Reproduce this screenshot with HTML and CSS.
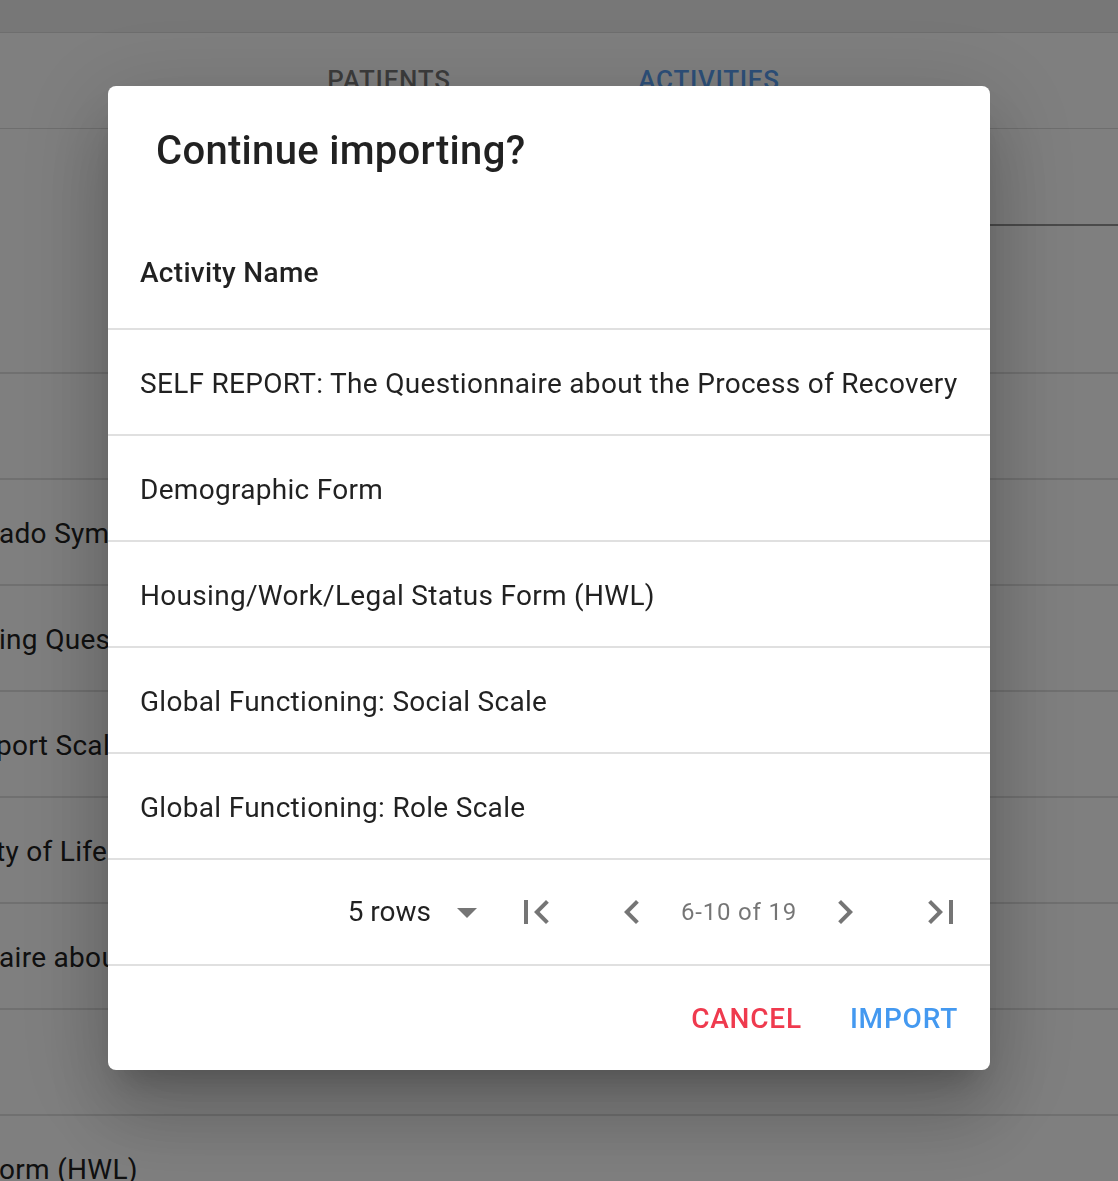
FILE: index.html
```html
<!DOCTYPE html>
<html lang="en">
<head>
<meta charset="utf-8">
<title>Continue importing?</title>
<link rel="stylesheet" href="styles.css">
</head>
<body>
<div class="page">
  <div class="appbar"></div>
  <div class="tabs">
    <div class="tab">Patients</div>
    <div class="tab tab-active">Activities</div>
  </div>
  <div class="search">
    <div class="search-field"></div>
  </div>
  <div class="bg-row"></div>
  <div class="bg-row">ado Symptom Index</div>
  <div class="bg-row">ing Questionnaire</div>
  <div class="bg-row bg-cut">port Scale</div>
  <div class="bg-row bg-cut">ty of Life</div>
  <div class="bg-row">aire about the Process of Recovery</div>
  <div class="bg-row"></div>
  <div class="bg-row">orm (HWL)</div>
</div>

<div class="backdrop">
  <div class="dialog" role="dialog" aria-labelledby="dlg-title">
    <h2 class="dialog-title" id="dlg-title">Continue importing?</h2>
    <div class="table">
      <div class="cell cell-head">Activity Name</div>
      <div class="cell">SELF REPORT: The Questionnaire about the Process of Recovery</div>
      <div class="cell">Demographic Form</div>
      <div class="cell">Housing/Work/Legal Status Form (HWL)</div>
      <div class="cell">Global Functioning: Social Scale</div>
      <div class="cell">Global Functioning: Role Scale</div>
      <div class="pagination">
        <span class="rows-label">5 rows</span>
        <svg class="icon icon-drop" viewBox="0 0 24 24" aria-hidden="true"><path d="M7 10l5 5 5-5z"/></svg>
        <svg class="icon icon-first" viewBox="0 0 24 24" aria-hidden="true"><path d="M18.41 16.59L13.82 12l4.59-4.59L17 6l-6 6 6 6zM6 6h2v12H6z"/></svg>
        <svg class="icon icon-prev" viewBox="0 0 24 24" aria-hidden="true"><path d="M15.41 7.41L14 6l-6 6 6 6 1.41-1.41L10.83 12z"/></svg>
        <span class="caption">6-10 of 19</span>
        <svg class="icon icon-next" viewBox="0 0 24 24" aria-hidden="true"><path d="M10 6L8.59 7.41 13.17 12l-4.58 4.59L10 18l6-6z"/></svg>
        <svg class="icon icon-last" viewBox="0 0 24 24" aria-hidden="true"><path d="M5.59 7.41L10.18 12l-4.59 4.59L7 18l6-6-6-6zM16 6h2v12h-2z"/></svg>
      </div>
    </div>
    <div class="actions">
      <button class="btn btn-cancel" type="button">Cancel</button>
      <button class="btn btn-import" type="button">Import</button>
    </div>
  </div>
</div>
</body>
</html>
```

FILE: styles.css
```css
* {
  box-sizing: border-box;
}

html, body {
  margin: 0;
  padding: 0;
  width: 1118px;
  height: 1181px;
  overflow: hidden;
  background: #ffffff;
  font-family: Roboto, "Liberation Sans", sans-serif;
  color: rgba(0, 0, 0, 0.87);
}

/* ---------- background page ---------- */
.page {
  width: 1118px;
}

.appbar {
  height: 33px;
  background: #eeeeee;
  border-bottom: 1px solid #dcdcdc;
}

.tabs {
  display: flex;
  height: 96px;
  padding-left: 229px;
  border-bottom: 1px solid #dcdcdc;
}

.tab {
  width: 320px;
  text-align: center;
  font-size: 26px;
  font-weight: 500;
  letter-spacing: 0.7px;
  text-transform: uppercase;
  color: rgba(0, 0, 0, 0.54);
  padding-top: 27px;
  line-height: 40px;
}

.tab-active {
  color: #5a9ff2;
}

.search {
  height: 245px;
  padding-top: 95px;
  border-bottom: 2px solid #e0e0e0;
}

.search-field {
  margin-left: 600px;
  height: 2px;
  background: rgba(0, 0, 0, 0.42);
}

.bg-row {
  height: 106px;
  padding-top: 4px;
  line-height: 100px;
  border-bottom: 2px solid #e0e0e0;
  font-size: 28px;
  letter-spacing: 0.3px;
  color: #212121;
  white-space: nowrap;
  overflow: hidden;
  text-indent: -1px;
}

.bg-cut {
  text-indent: -4px;
}

/* ---------- modal ---------- */
.backdrop {
  position: fixed;
  inset: 0;
  background: rgba(0, 0, 0, 0.5);
  display: flex;
  align-items: flex-start;
  justify-content: flex-start;
  padding: 86px 0 0 108px;
}

.dialog {
  width: 882px;
  background: #ffffff;
  border-radius: 8px;
  box-shadow:
    0 22px 30px -14px rgba(0, 0, 0, 0.2),
    0 48px 76px 6px rgba(0, 0, 0, 0.14),
    0 18px 92px 16px rgba(0, 0, 0, 0.12);
  overflow: hidden;
}

.dialog-title {
  margin: 0;
  padding: 33px 48px 31px;
  font-size: 40px;
  font-weight: 500;
  line-height: 64px;
  letter-spacing: 0.3px;
  color: rgba(0, 0, 0, 0.87);
}

.table {
  margin-top: 2px;
}

.cell {
  padding: 34px 32px 30px;
  font-size: 28px;
  line-height: 40px;
  letter-spacing: 0.3px;
  border-bottom: 2px solid #e0e0e0;
  color: rgba(0, 0, 0, 0.87);
  white-space: nowrap;
}

.cell-head {
  padding: 33px 32px 31px;
  font-weight: 500;
  line-height: 48px;
}

.pagination {
  display: flex;
  align-items: center;
  justify-content: flex-end;
  height: 106px;
  padding-right: 25px;
  border-bottom: 2px solid #e0e0e0;
}

.rows-label {
  font-size: 28px;
  line-height: 40px;
  color: rgba(0, 0, 0, 0.87);
}

.icon {
  width: 48px;
  height: 48px;
  fill: rgba(0, 0, 0, 0.54);
  flex: none;
}

.icon-drop {
  margin-left: 12px;
}

.icon-first {
  margin-left: 21px;
}

.icon-prev {
  margin-left: 48px;
}

.caption {
  margin-left: 25px;
  font-size: 24px;
  letter-spacing: 0.8px;
  line-height: 40px;
  color: rgba(0, 0, 0, 0.54);
}

.icon-next {
  margin-left: 24px;
}

.icon-last {
  margin-left: 48px;
}

.actions {
  display: flex;
  justify-content: flex-end;
  gap: 16px;
  padding: 16px 16px 15px;
}

.btn {
  border: 0;
  background: transparent;
  padding: 12px 16px;
  min-width: 128px;
  font-family: Roboto, "Liberation Sans", sans-serif;
  font-size: 28px;
  font-weight: 500;
  line-height: 49px;
  letter-spacing: 0.8px;
  text-transform: uppercase;
  border-radius: 8px;
}

.btn-cancel {
  color: #ef3a4e;
}

.btn-import {
  color: #4499f0;
}
```
